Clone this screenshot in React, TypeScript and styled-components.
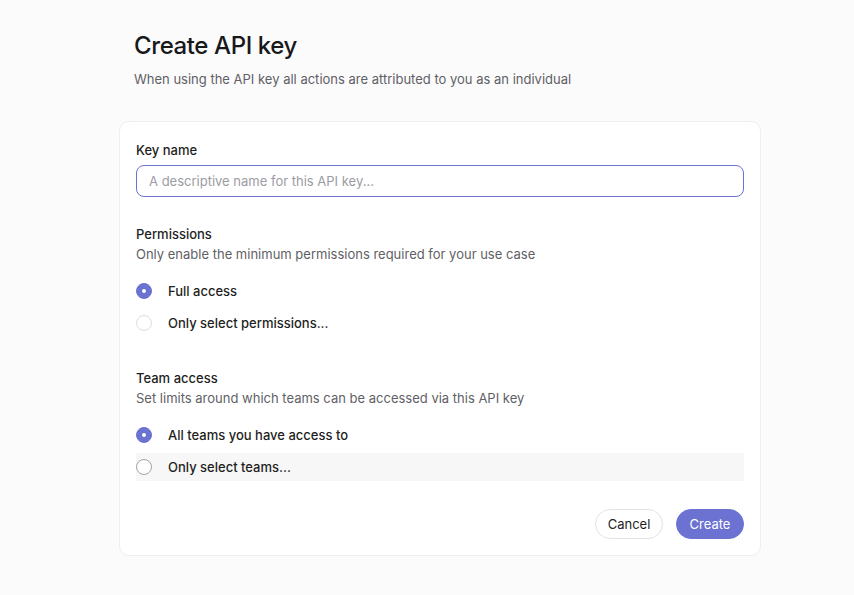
import styled, { createGlobalStyle } from 'styled-components';

const GlobalStyle = createGlobalStyle`
  html, body {
    margin: 0;
    padding: 0;
    background: #fbfbfb;
    font-family: Inter, "Noto Sans", sans-serif;
    color: #1c1c1e;
  }
  * {
    box-sizing: border-box;
  }
`;

const permissionOptions = [
  { label: 'Full access', checked: true },
  { label: 'Only select permissions...', checked: false },
];

const teamOptions = [
  { label: 'All teams you have access to', checked: true },
  { label: 'Only select teams...', checked: false, hovered: true },
];

const StyledPage = styled.main`
  width: 642px;
  margin-left: 119px;
  padding-top: 31px;
`;

const StyledHeader = styled.header`
  padding-left: 15px;
  margin-bottom: 33px;

  & > h1 {
    margin: 0;
    font-size: 24px;
    line-height: 30px;
    font-weight: 500;
    letter-spacing: -0.4px;
    color: #18181b;
  }
  & > p {
    margin: 9px 0 0;
    font-size: 13px;
    line-height: 18px;
    color: #5f5f66;
  }
`;

const StyledCard = styled.section`
  background: #fff;
  border: 1px solid #efefef;
  border-radius: 10px;
  padding: 19px 16px 16px;
`;

const StyledFieldLabel = styled.label`
  display: block;
  font-size: 13px;
  line-height: 18px;
  font-weight: 500;
  color: #1f1f23;
  margin-bottom: 6px;
`;

const StyledInput = styled.input`
  display: block;
  width: 100%;
  height: 32px;
  padding: 0 12px;
  border: 1px solid #6b72d1;
  border-radius: 8px;
  font-family: inherit;
  font-size: 13px;
  color: #1c1c1e;
  outline: none;

  &::placeholder {
    color: #9c9ca3;
  }
`;

const StyledGroup = styled.div`
  margin-top: 28px;

  & + & {
    margin-top: 32px;
  }
`;

const StyledGroupTitle = styled.h3`
  margin: 0;
  font-size: 13px;
  line-height: 18px;
  font-weight: 500;
  color: #1f1f23;
`;

const StyledGroupHint = styled.p`
  margin: 2px 0 14px;
  font-size: 13px;
  line-height: 18px;
  color: #5f5f66;
`;

const StyledOptions = styled.div`
  display: flex;
  flex-direction: column;
  gap: 4px;
`;

const StyledOption = styled.label<{ $hovered?: boolean }>`
  display: flex;
  align-items: center;
  gap: 16px;
  height: 28px;
  font-size: 13px;
  font-weight: 500;
  color: #1f1f23;
  background: ${({ $hovered }) => ($hovered ? '#f7f7f7' : 'transparent')};
  cursor: pointer;
`;

const StyledRadio = styled.span<{ $checked?: boolean; $hovered?: boolean }>`
  width: 16px;
  height: 16px;
  flex-shrink: 0;
  border-radius: 50%;
  display: flex;
  align-items: center;
  justify-content: center;
  background: ${({ $checked }) => ($checked ? '#6b72d1' : '#fff')};
  border: 1px solid
    ${({ $checked, $hovered }) => ($checked ? '#6b72d1' : $hovered ? '#a3a3a8' : '#dedee1')};

  &::after {
    content: '';
    display: ${({ $checked }) => ($checked ? 'block' : 'none')};
    width: 4px;
    height: 4px;
    border-radius: 50%;
    background: #fff;
  }
`;

const StyledActions = styled.div`
  display: flex;
  justify-content: flex-end;
  gap: 13px;
  margin-top: 28px;
`;

const StyledButton = styled.button<{ $primary?: boolean }>`
  height: 30px;
  width: 68px;
  padding: 0;
  border-radius: 15px;
  font-family: inherit;
  font-size: 13px;
  font-weight: 400;
  cursor: pointer;
  border: 1px solid ${({ $primary }) => ($primary ? '#6b72d1' : '#e3e3e6')};
  background: ${({ $primary }) => ($primary ? '#6b72d1' : '#fff')};
  color: ${({ $primary }) => ($primary ? '#fff' : '#1f1f23')};
`;

type Option = { label: string; checked: boolean; hovered?: boolean };

const RadioGroup = ({ title, hint, options }: { title: string; hint: string; options: Option[] }) => (
  <StyledGroup>
    <StyledGroupTitle>{title}</StyledGroupTitle>
    <StyledGroupHint>{hint}</StyledGroupHint>
    <StyledOptions>
      {options.map((option) => (
        <StyledOption key={option.label} $hovered={option.hovered}>
          <StyledRadio $checked={option.checked} $hovered={option.hovered} />
          {option.label}
        </StyledOption>
      ))}
    </StyledOptions>
  </StyledGroup>
);

const App = () => {
  return (
    <>
      <GlobalStyle />
      <StyledPage>
        <StyledHeader>
          <h1>Create API key</h1>
          <p>When using the API key all actions are attributed to you as an individual</p>
        </StyledHeader>
        <StyledCard>
          <StyledFieldLabel htmlFor="key-name">Key name</StyledFieldLabel>
          <StyledInput id="key-name" placeholder="A descriptive name for this API key..." />
          <RadioGroup
            title="Permissions"
            hint="Only enable the minimum permissions required for your use case"
            options={permissionOptions}
          />
          <RadioGroup
            title="Team access"
            hint="Set limits around which teams can be accessed via this API key"
            options={teamOptions}
          />
          <StyledActions>
            <StyledButton>Cancel</StyledButton>
            <StyledButton $primary>Create</StyledButton>
          </StyledActions>
        </StyledCard>
      </StyledPage>
    </>
  );
};

export default App;
